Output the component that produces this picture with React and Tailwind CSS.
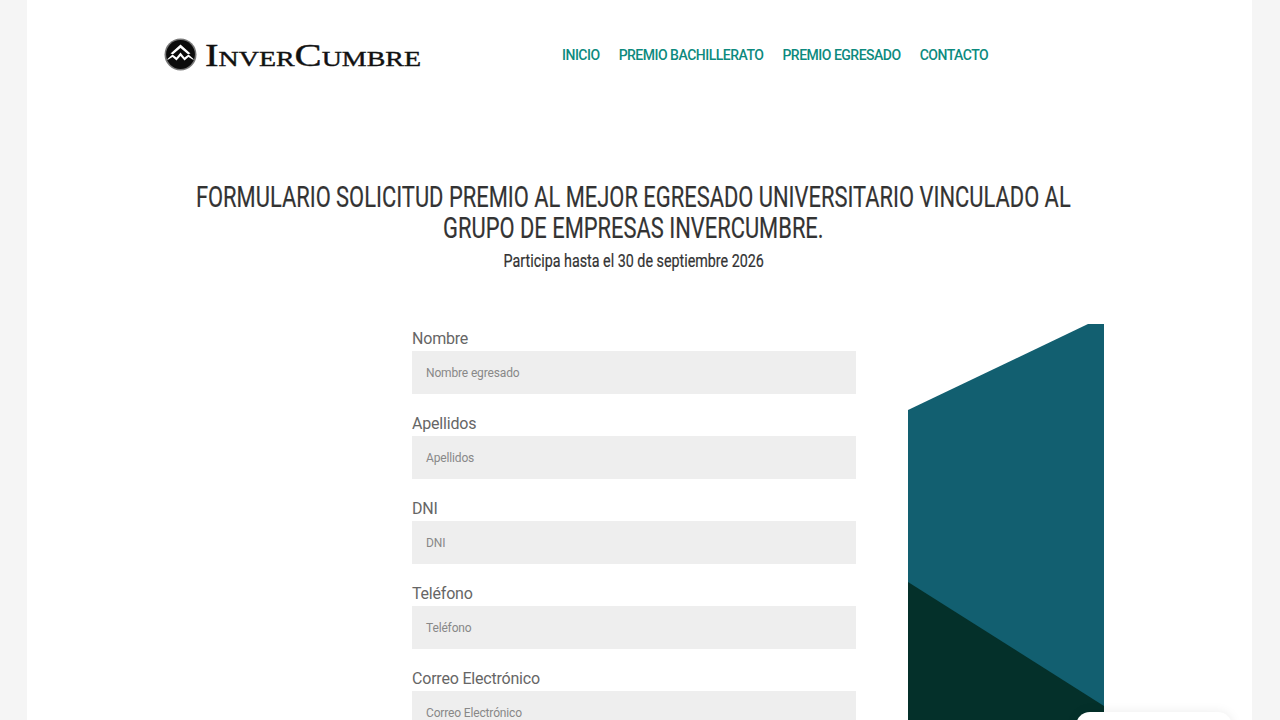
const fields = [
  ["Nombre", "Nombre egresado"],
  ["Apellidos", "Apellidos"],
  ["DNI", "DNI"],
  ["Teléfono", "Teléfono"],
  ["Correo Electrónico", "Correo Electrónico"],
];
const nav = ["INICIO", "PREMIO BACHILLERATO", "PREMIO EGRESADO", "CONTACTO"];
const sans = "font-['Roboto',sans-serif]";

function LogoMark() {
  return (
    <svg width="33" height="33" viewBox="0 0 33 33" className="shrink-0">
      <circle cx="16.5" cy="16.5" r="16" fill="#777" />
      <circle cx="16.5" cy="16.5" r="14.4" fill="#0b0b0b" />
      <path d="M6.5 15.5 L16.5 6.5 L26.5 15.5 L24 16.2 L16.5 10 L9 16.2 Z" fill="#fff" />
      <path d="M3.5 21 L8.5 16.5 L12.5 19.5 L16.5 14.5 L20.5 19.5 L24.5 16.5 L29.5 21 L29.5 22 L24.5 19 L20.5 22.5 L16.5 18 L12.5 22.5 L8.5 19 L3.5 22 Z" fill="#fff" />
    </svg>
  );
}

export default function App() {
  return (
    <div className="relative h-[720px] overflow-hidden bg-[#f5f5f5] pl-[27px]">
      <div className="h-full w-[1225px] bg-white">
        <header className="flex h-[109px] items-start pl-[137px] pt-[38px]">
          <div className="flex h-[33px] w-[398px] items-center gap-[8px]">
            <LogoMark />
            <span className="origin-left scale-x-[1.27] whitespace-nowrap font-['Liberation_Serif',serif] text-[32px] leading-none text-[#111] [font-variant:small-caps] [-webkit-text-stroke:0.4px_#111]">
              InverCumbre
            </span>
          </div>
          <nav className={`flex h-[33px] items-center gap-[19px] pt-[1px] ${sans} text-[14px] font-medium tracking-[-0.5px] text-[#0d8a7e]`}>
            {nav.map((n) => (
              <a key={n} className="whitespace-nowrap">{n}</a>
            ))}
          </nav>
        </header>
        <section className={`flex flex-col items-center pr-[12px] pt-[73px] text-center ${sans}`}>
          <h1 className="scale-x-[0.755] whitespace-nowrap text-[29px] font-normal leading-[31px] text-[#333] [-webkit-text-stroke:0.2px_#333]">
            FORMULARIO SOLICITUD PREMIO AL MEJOR EGRESADO UNIVERSITARIO VINCULADO AL
            <br />
            GRUPO DE EMPRESAS INVERCUMBRE.
          </h1>
          <p className="mt-[6px] scale-x-[0.795] whitespace-nowrap text-[18px] font-normal leading-[22px] text-[#333] [-webkit-text-stroke:0.2px_#333]">
            Participa hasta el 30 de septiembre 2026
          </p>
        </section>
        <main className="flex items-start pl-[385px] pt-[52px]">
          <form className={`flex w-[444px] flex-col gap-[19px] pt-[4px] ${sans}`}>
            {fields.map(([label, ph]) => (
              <div key={label} className="flex flex-col">
                <label className="h-[23px] text-[16px] leading-[22px] tracking-[-0.2px] text-[#666]">{label}</label>
                <div className="flex h-[43px] items-center bg-[#eeeeee] px-[14px] text-[12px] tracking-[-0.15px] text-[#888]">{ph}</div>
              </div>
            ))}
          </form>
          <svg width="196" height="400" viewBox="0 0 196 400" className="ml-[52px] shrink-0">
            <path d="M0 86 L180 0 L196 0 L196 400 L0 400 Z" fill="#125f70" />
            <path d="M0 258 L196 382 L196 400 L0 400 Z" fill="#04302a" />
          </svg>
        </main>
      </div>
      <div className="absolute left-[1076px] top-[712px] h-[60px] w-[156px] rounded-[14px] bg-white shadow-[0_0_12px_rgba(0,0,0,0.08)]" />
    </div>
  );
}
